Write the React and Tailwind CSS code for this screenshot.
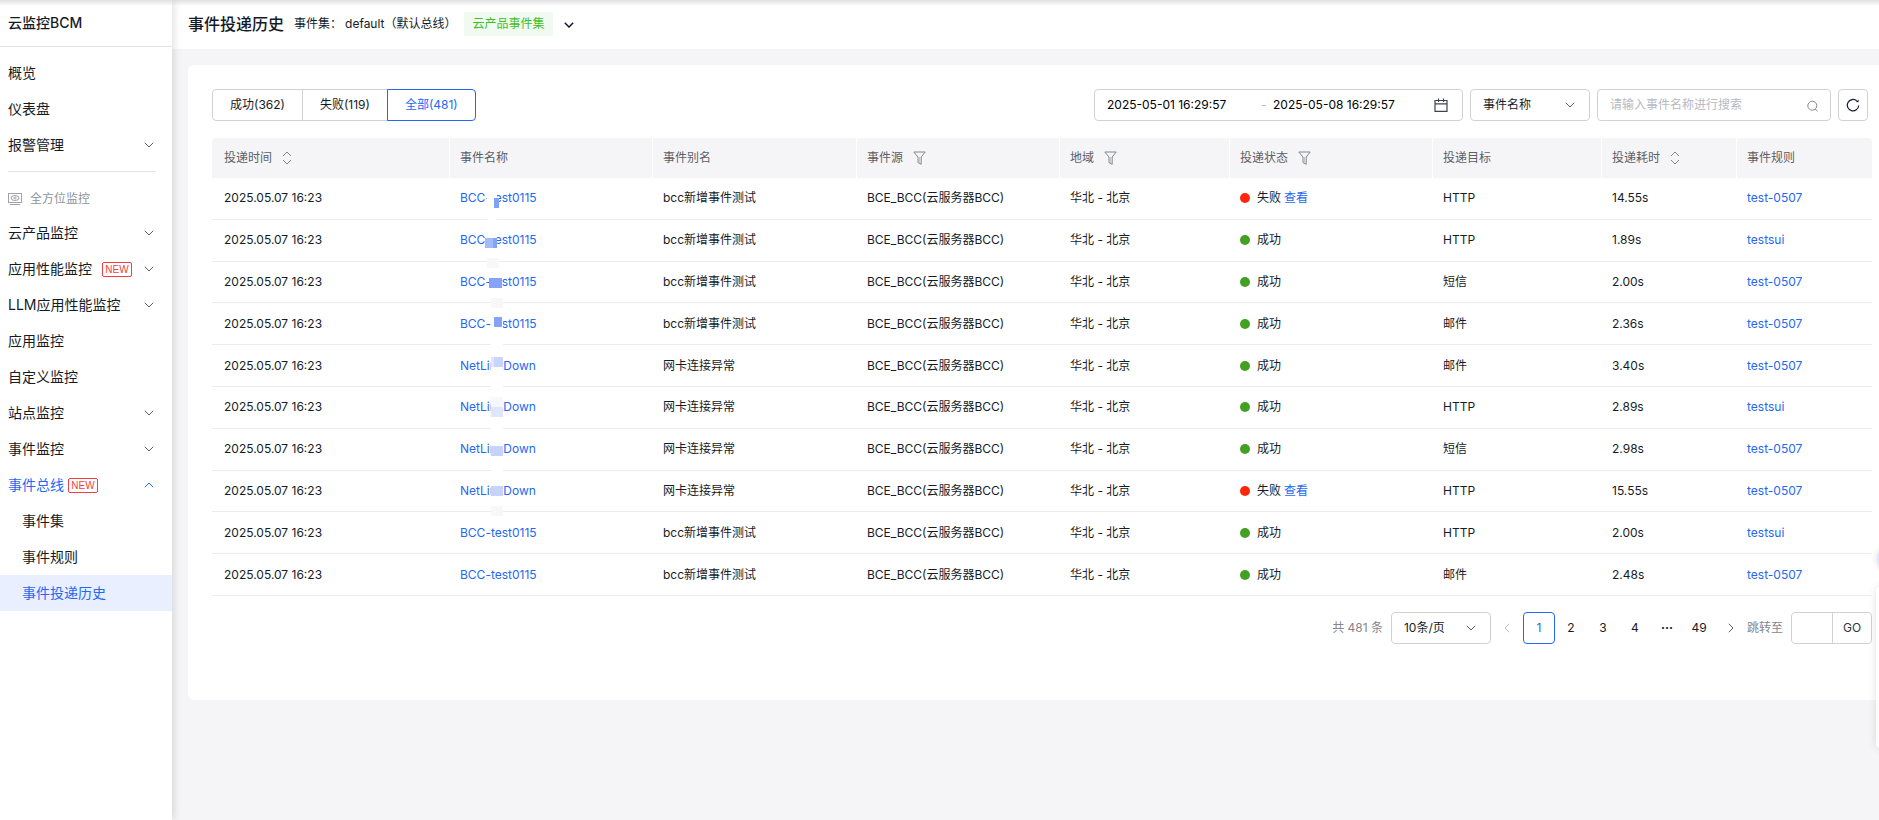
import { useState } from "react";

const MENU = [
  { label: "云产品监控", arrow: true },
  { label: "应用性能监控", arrow: true, badge: true, wide: true },
  { label: "LLM应用性能监控", arrow: true },
  { label: "应用监控" },
  { label: "自定义监控" },
  { label: "站点监控", arrow: true },
  { label: "事件监控", arrow: true },
];

const COLUMNS = [
  { title: "投递时间", width: "w-[238px]", icon: "sort" },
  { title: "事件名称", width: "w-[203px]" },
  { title: "事件别名", width: "w-[204px]" },
  { title: "事件源", width: "w-[203px]", icon: "filter" },
  { title: "地域", width: "w-[170px]", icon: "filter" },
  { title: "投递状态", width: "w-[203px]", icon: "filter" },
  { title: "投递目标", width: "w-[169px]" },
  { title: "投递耗时", width: "w-[135px]", icon: "sort" },
  { title: "事件规则", width: "w-[135px]" },
];

const BCC = { name: "BCC-test0115", alias: "bcc新增事件测试" };
const NET = { name: "NetLinkDown", alias: "网卡连接异常" };

const ROWS = [
  { ...BCC, ok: false, target: "HTTP", cost: "14.55s", rule: "test-0507" },
  { ...BCC, ok: true, target: "HTTP", cost: "1.89s", rule: "testsui" },
  { ...BCC, ok: true, target: "短信", cost: "2.00s", rule: "test-0507" },
  { ...BCC, ok: true, target: "邮件", cost: "2.36s", rule: "test-0507" },
  { ...NET, ok: true, target: "邮件", cost: "3.40s", rule: "test-0507" },
  { ...NET, ok: true, target: "HTTP", cost: "2.89s", rule: "testsui" },
  { ...NET, ok: true, target: "短信", cost: "2.98s", rule: "test-0507" },
  { ...NET, ok: false, target: "HTTP", cost: "15.55s", rule: "test-0507" },
  { ...BCC, ok: true, target: "HTTP", cost: "2.00s", rule: "testsui" },
  { ...BCC, ok: true, target: "邮件", cost: "2.48s", rule: "test-0507" },
];

// x, y, width, height, fill
const MOSAIC = [
  [2, 8, 10, 40, "#ffffff"],
  [9, 20, 5, 10, "#7fa1f9"],
  [0, 48, 12, 22, "#ffffff"],
  [0, 60, 8, 10, "#a3bbfb"],
  [8, 60, 4, 10, "#83a3f9"],
  [2, 80, 12, 10, "#f8f8f9"],
  [5, 90, 12, 20, "#ffffff"],
  [4, 100, 13, 10, "#85a4f9"],
  [6, 120, 12, 10, "#f8f8f9"],
  [6, 130, 12, 198, "#ffffff"],
  [9, 139, 8, 10, "#85a4f9"],
  [6, 179, 3, 10, "#e0e8fe"],
  [9, 179, 9, 10, "#c8d6fd"],
  [6, 219, 12, 10, "#f6f8ff"],
  [6, 229, 12, 10, "#dfe7fe"],
  [6, 268, 12, 10, "#c5d4fd"],
  [6, 308, 12, 10, "#c5d4fd"],
  [6, 328, 12, 10, "#f8f8f9"],
];

function Chevron({ up = false, bold = false, className = "" }) {
  return (
    <svg
      className={`shrink-0 ${className}`}
      width="10"
      height="6"
      viewBox="0 0 10 6"
      fill="none"
      stroke="currentColor"
      strokeWidth={bold ? 1.5 : 1}
      aria-hidden="true"
    >
      <path d={up ? "M.8 5.200L5 1l4.200 4.200" : "M.8.8L5 5 9.200.8"} />
    </svg>
  );
}

function SortIcon() {
  return (
    <svg width="10" height="14" viewBox="0 0 10 14" fill="none" stroke="#84868c" aria-hidden="true">
      <path d="M1 5l4-4 4 4M1 9l4 4 4-4" />
    </svg>
  );
}

function FilterIcon() {
  return (
    <svg width="13" height="14" viewBox="0 0 13 14" fill="none" stroke="#84868c" aria-hidden="true">
      <path d="M.8 1h11.400L8.200 6v7.300L5 11.500V6z" />
      <path d="M6.600 6v6" stroke="#c4c5c9" />
    </svg>
  );
}

function MonitorIcon() {
  return (
    <svg width="14" height="12" viewBox="0 0 14 12" fill="none" stroke="#a0a2a8" aria-hidden="true">
      <rect x=".5" y=".5" width="13" height="9" />
      <ellipse cx="7" cy="5" rx="4" ry="2.500" />
      <circle cx="7" cy="5" r="1" />
      <path d="M2 11.500h10" />
    </svg>
  );
}

function CalendarIcon() {
  return (
    <svg width="14" height="14" viewBox="0 0 14 14" fill="none" stroke="#3f434c" strokeWidth="1.200" aria-hidden="true">
      <path d="M1 2.500h12v10.800H1zM1 5.800h12M4.500.5v3.500M9.500.5v3.500" />
    </svg>
  );
}

function SearchIcon() {
  return (
    <svg width="11" height="14" viewBox="0 0 11 14" fill="none" stroke="#84868c" aria-hidden="true">
      <circle cx="5.300" cy="7.700" r="4.500" />
      <path d="M8.200 11l2.300 2.300" />
    </svg>
  );
}

function RefreshIcon() {
  return (
    <svg width="14" height="14" viewBox="0 0 14 14" fill="none" stroke="#151b26" strokeWidth="1.200" aria-hidden="true">
      <path d="M12.700 7.500a5.700 5.700 0 1 1-2-4.700" />
      <path d="M9.800 3.900l2.600.3.200-2.700z" fill="#151b26" stroke="none" />
    </svg>
  );
}

function NewBadge() {
  return (
    <span className="flex h-[15px] w-[30px] items-center justify-center rounded-[2px] border border-[#f33e3e] pt-px font-['Liberation_Sans',sans-serif] text-[10px] leading-none text-[#f33e3e]">
      NEW
    </span>
  );
}

function MenuItem({ label, arrow, badge, wide, open }) {
  return (
    <li>
      <a
        href="#"
        className={`flex h-9 items-center pr-[18px] pl-2 text-sm ${wide ? "gap-2.5" : "gap-1"} ${open ? "text-[#2468f2]" : ""}`}
      >
        {label}
        {badge && <NewBadge />}
        {arrow && <Chevron up={open} className={`ml-auto ${open ? "" : "text-[#5c5f66]"}`} />}
      </a>
    </li>
  );
}

function Sidebar() {
  return (
    <aside className="z-10 flex w-[172px] shrink-0 flex-col bg-white shadow-[2px_0_8px_rgba(0,0,0,0.12)]">
      <h2 className="flex h-[47px] items-center border-b border-[#e2e3e6] px-2 text-sm font-medium">云监控BCM</h2>
      <nav className="pt-2">
        <ul>
          <MenuItem label="概览" />
          <MenuItem label="仪表盘" />
          <MenuItem label="报警管理" arrow />
        </ul>
        <hr className="mt-2 mr-4 ml-2 border-[#e2e3e6]" />
        <p className="mt-2.5 flex h-[33px] items-center gap-2 pl-2 text-xs text-[#8f9299]">
          <MonitorIcon />
          全方位监控
        </p>
        <ul>
          {MENU.map((item) => (
            <MenuItem key={item.label} {...item} />
          ))}
          <MenuItem label="事件总线" arrow badge open />
        </ul>
        <ul className="text-sm">
          <li>
            <a href="#" className="flex h-9 items-center pl-[22px]">事件集</a>
          </li>
          <li>
            <a href="#" className="flex h-9 items-center pl-[22px]">事件规则</a>
          </li>
          <li>
            <a href="#" aria-current="page" className="flex h-9 items-center bg-[#e9effe] pl-[22px] text-[#2468f2]">
              事件投递历史
            </a>
          </li>
        </ul>
      </nav>
    </aside>
  );
}

function PageHeader() {
  return (
    <header className="flex h-[49px] items-center bg-white pb-0.5 pl-4 text-xs">
      <h1 className="text-base font-medium">事件投递历史</h1>
      <p className="ml-2.5">事件集：</p>
      <p className="ml-[3px]">default（默认总线）</p>
      <span className="ml-2 flex h-6 items-center rounded-[2px] bg-[#f0faf0] px-2 text-[#3fbf28]">云产品事件集</span>
      <button type="button" aria-label="切换事件集" className="ml-2.5 p-px pt-[3px]">
        <Chevron bold />
      </button>
    </header>
  );
}

function StatusTabs() {
  const [tab, setTab] = useState("all");
  const tabs = [
    { id: "success", label: "成功(362)", shape: "rounded-l" },
    { id: "fail", label: "失败(119)", shape: "-ml-px" },
    { id: "all", label: "全部(481)", shape: "-ml-px rounded-r" },
  ];

  return (
    <div className="flex">
      {tabs.map(({ id, label, shape }) => (
        <button
          key={id}
          type="button"
          onClick={() => setTab(id)}
          className={`h-8 border px-[17px] ${shape} ${
            tab === id ? "z-10 border-[#2468f2] text-[#2468f2]" : "border-[#d0d2d6]"
          }`}
        >
          {label}
        </button>
      ))}
    </div>
  );
}

function Select({ label, value, className }) {
  return (
    <div className={`relative ${className}`}>
      <select
        aria-label={label}
        defaultValue={value}
        className="h-8 w-full appearance-none rounded border border-[#d0d2d6] bg-white pl-3"
      >
        <option>{value}</option>
      </select>
      <Chevron className="pointer-events-none absolute top-[13px] right-[15px] text-[#5c5f66]" />
    </div>
  );
}

function Toolbar() {
  return (
    <div className="mr-1 flex items-center justify-between">
      <StatusTabs />
      <div className="flex items-center gap-[7px]">
        <div className="flex h-8 w-[369px] items-center rounded border border-[#d0d2d6] pr-3.5 pl-3 text-black">
          <input aria-label="开始时间" defaultValue="2025-05-01 16:29:57" className="w-[154px] outline-none" />
          <span className="w-3 text-[#b8babf]">-</span>
          <input aria-label="结束时间" defaultValue="2025-05-08 16:29:57" className="w-[154px] outline-none" />
          <button type="button" aria-label="选择日期" className="ml-auto">
            <CalendarIcon />
          </button>
        </div>
        <Select label="搜索字段" value="事件名称" className="w-[120px]" />
        <div className="flex h-8 w-[234px] items-center rounded border border-[#d0d2d6] px-3">
          <input
            aria-label="搜索"
            placeholder="请输入事件名称进行搜索"
            className="min-w-0 flex-1 outline-none placeholder:text-[#b8babf]"
          />
          <button type="button" aria-label="搜索事件">
            <SearchIcon />
          </button>
        </div>
        <button
          type="button"
          aria-label="刷新"
          className="flex h-8 w-[30px] items-center justify-center rounded border border-[#d0d2d6]"
        >
          <RefreshIcon />
        </button>
      </div>
    </div>
  );
}

function Status({ ok }) {
  return (
    <span className="flex items-center">
      <span className={`mr-[7px] size-2.5 rounded-full ${ok ? "bg-[#43a023]" : "bg-[#ff260a]"}`} />
      {ok ? "成功" : "失败"}
      {!ok && (
        <a href="#" className="ml-[3px] text-[#2468f2]">
          查看
        </a>
      )}
    </span>
  );
}

function HistoryTable() {
  const cell = "border-b border-[#ebecee] pl-2.5 first:pl-3";

  return (
    <div className="relative mt-[17px]">
      <table className="h-[458px] w-full table-fixed border-separate border-spacing-0 text-left">
        <thead>
          <tr className="h-10 text-[#5c5f66]">
            {COLUMNS.map(({ title, width, icon }) => (
              <th
                key={title}
                className={`${width} h-10 border-r border-white bg-[#f5f5f8] pl-2.5 font-normal first:rounded-tl first:pl-3 last:rounded-tr last:border-r-0`}
              >
                <span className="flex items-center gap-2.5">
                  {title}
                  {icon === "sort" && <SortIcon />}
                  {icon === "filter" && <FilterIcon />}
                </span>
              </th>
            ))}
          </tr>
        </thead>
        <tbody>
          {ROWS.map((row, i) => (
            <tr key={i}>
              <td className={cell}>2025.05.07 16:23</td>
              <td className={cell}>
                <a href="#" className="text-[#2468f2]">{row.name}</a>
              </td>
              <td className={cell}>{row.alias}</td>
              <td className={cell}>BCE_BCC(云服务器BCC)</td>
              <td className={cell}>华北 - 北京</td>
              <td className={cell}>
                <Status ok={row.ok} />
              </td>
              <td className={cell}>{row.target}</td>
              <td className={cell}>{row.cost}</td>
              <td className={cell}>
                <a href="#" className="text-[#2468f2]">{row.rule}</a>
              </td>
            </tr>
          ))}
        </tbody>
      </table>
      <svg className="pointer-events-none absolute top-10 left-[273px]" width="18" height="340" aria-hidden="true">
        {MOSAIC.map(([x, y, width, height, fill]) => (
          <rect key={`${x}-${y}-${fill}`} x={x} y={y} width={width} height={height} fill={fill} />
        ))}
      </svg>
    </div>
  );
}

function Pagination() {
  const page = "flex size-8 items-center justify-center rounded";

  return (
    <nav aria-label="分页" className="mt-4 flex items-center justify-end">
      <span className="mr-2 text-[#84868c]">共 481 条</span>
      <Select label="每页条数" value="10条/页" className="w-[100px]" />
      <button type="button" aria-label="上一页" className={`${page} text-[#b8babf]`}>
        <Chevron className="rotate-90" />
      </button>
      <button type="button" aria-current="page" className={`${page} border border-[#2468f2] text-[#2468f2]`}>
        1
      </button>
      <button type="button" className={page}>2</button>
      <button type="button" className={page}>3</button>
      <button type="button" className={page}>4</button>
      <span className={`${page} font-bold`}>···</span>
      <button type="button" className={page}>49</button>
      <button type="button" aria-label="下一页" className={`${page} text-[#5c5f66]`}>
        <Chevron className="-rotate-90" />
      </button>
      <label htmlFor="jump" className="mr-2 text-[#84868c]">
        跳转至
      </label>
      <input id="jump" className="h-8 w-[42px] rounded-l border border-[#d0d2d6] px-2 outline-none" />
      <button type="button" className="-ml-px h-8 w-10 rounded-r border border-[#d0d2d6] text-[#303540]">
        GO
      </button>
    </nav>
  );
}

export default function App() {
  return (
    <div className="relative flex min-h-screen overflow-hidden bg-[#f5f5f8] font-[Inter,'Noto_Sans_CJK_SC',sans-serif] text-[#151b26]">
      <Sidebar />
      <div className="min-w-0 flex-1">
        <PageHeader />
        <main className="mt-4 ml-4 rounded-l-md bg-white pt-6 pr-[7px] pb-14 pl-6 text-xs">
          <Toolbar />
          <HistoryTable />
          <Pagination />
        </main>
      </div>
      {/* shadow of the console bar above */}
      <div className="pointer-events-none absolute inset-x-0 top-0 z-20 h-1.5 bg-linear-to-b from-black/12 to-transparent" />
      {/* docked help widgets */}
      <div className="absolute top-[547px] -right-[22px] size-6 rounded-full bg-[#dce8ff] shadow-[0_0_6px_rgba(0,0,0,0.15)]" />
      <div className="absolute top-[587px] -right-[37px] h-[161px] w-10 rounded bg-white/60 shadow-[0_0_8px_rgba(0,0,0,0.12)]" />
    </div>
  );
}
